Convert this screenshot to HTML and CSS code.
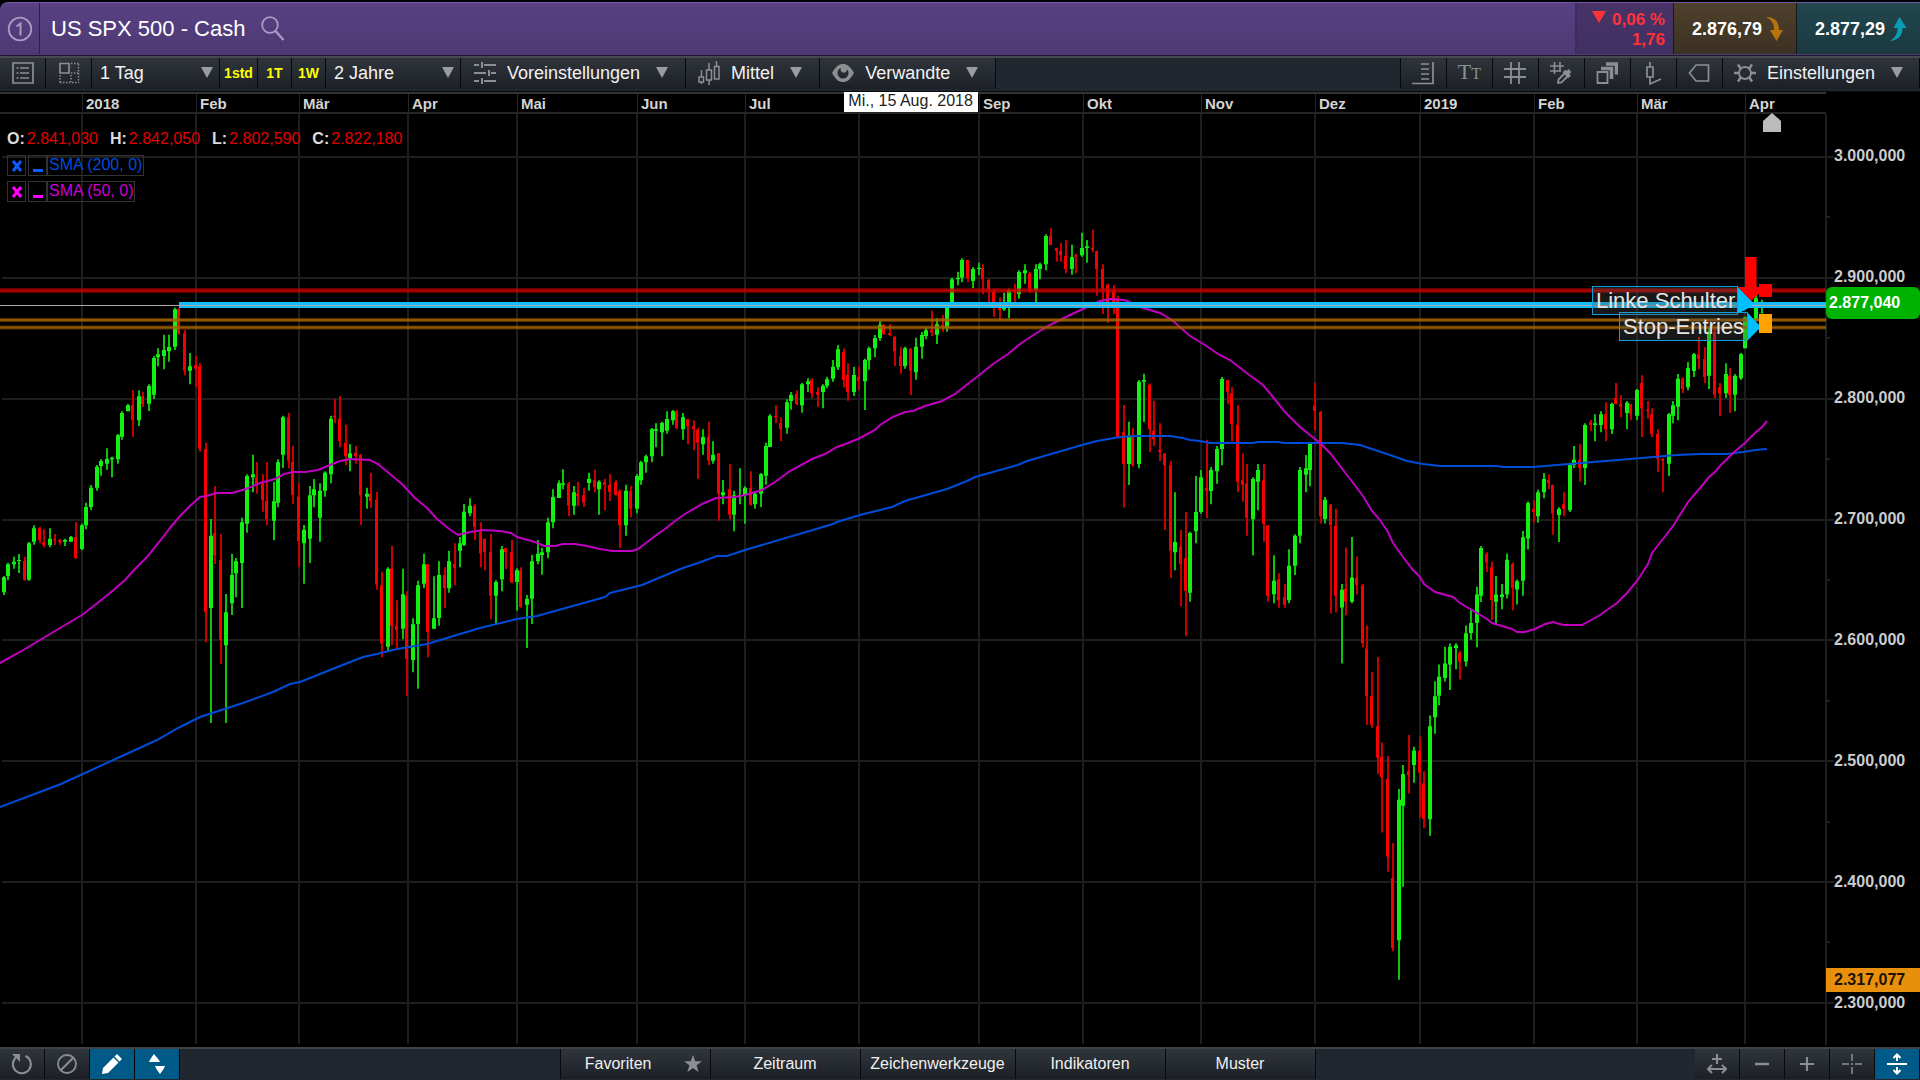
FILE: index.html
```html
<!DOCTYPE html>
<html lang="de">
<head>
<meta charset="utf-8">
<title>US SPX 500 - Cash</title>
<link rel="stylesheet" href="styles.css">
</head>
<body>
<header class="title-bar">
  <div class="slot">
    <svg class="icon" width="26" height="26" viewBox="0 0 26 26"><circle cx="13" cy="13" r="11.3"/><path d="M9.5 10.5 13.5 7.500V19.500" stroke-width="2"/></svg>
  </div>
  <h1 class="instrument">US SPX 500 - Cash</h1>
  <button class="search" aria-label="Suchen"><svg class="icon" width="26" height="28" viewBox="0 0 26 28"><circle cx="10" cy="10" r="7.800"/><path d="M15.500 16 23.500 25" stroke-width="2.400"/></svg></button>
  <div class="change"><span><i class="down"></i>0,06 %</span><span>1,76</span></div>
  <button class="quote sell">2.876,79<svg width="18" height="26" viewBox="0 0 18 26"><path fill="#b8720d" d="M0 1C9 1 13 6 13 14H17L10.500 25 4 14H8C8 8 6 4 0 1Z"/></svg></button>
  <button class="quote buy">2.877,29<svg width="18" height="26" viewBox="0 0 18 26"><path fill="#0a9cb5" d="M1 25C10 24 13.500 19 13.500 12H17.500L10.500 1 4.500 12H8.500C8.500 18 6 22 1 25Z"/></svg></button>
</header>

<nav class="toolbar" aria-label="Chart">
  <button class="tool" aria-label="Liste"><svg class="icon" width="22" height="22" viewBox="0 0 22 22"><path d="M1 1H21V21H1ZM8 6H17M8 11H17M8 16H17M4.500 6H6.500M4.500 11H6.500M4.500 16H6.500" stroke-width="1.700"/></svg></button>
  <button class="tool" aria-label="Layout"><svg class="icon" width="22" height="22" viewBox="0 0 22 22"><path d="M2 1.500H11V11H2Z" stroke-width="1.700"/><path d="M13 1.500H21M20.500 2V20M2 13V20.500M2 20.500H21M13 13V20M13 11H21" stroke-dasharray="1.500 1.500" stroke-width="1.500"/></svg></button>
  <span class="picker wide"><select aria-label="Intervall"><option>1 Tag</option></select><i class="caret"></i></span>
  <button class="quick q1">1std</button>
  <button class="quick q2">1T</button>
  <button class="quick q2">1W</button>
  <span class="picker wider"><select aria-label="Zeitraum"><option>2 Jahre</option></select><i class="caret"></i></span>
  <button class="menu presets"><svg class="icon" width="22" height="24" viewBox="0 0 22 24"><path d="M0 4H5M10 4H22M0 12H12M17 12H22M0 20H5M10 20H22" stroke-width="2"/><path d="M8 1V7M15 9V15M8 17V23" stroke-width="2"/></svg>Voreinstellungen<i class="caret"></i></button>
  <button class="menu"><svg class="icon" width="22" height="26" viewBox="0 0 22 26"><path d="M1 17H5.500V22H1ZM8.500 10H13.500V20H8.500ZM16.500 6.500H21V19H16.500ZM3.500 10V17M3.500 22V24M11 3V10M11 20V25M18.500 1V6.500" stroke-width="1.500"/></svg>Mittel<i class="caret"></i></button>
  <button class="menu"><svg width="22" height="20" viewBox="0 0 22 20"><path fill="#8c8f92" fill-rule="evenodd" d="M0 10C4 3 7 1 11 1S18 3 22 10C18 17 15 19 11 19S4 17 0 10ZM11 4.500A5.500 5.500 0 1 0 16.500 10 5 5 0 0 0 15 6.500 3 3 0 0 1 11 9.500 3 3 0 0 1 9 5Z"/></svg>Verwandte<i class="caret"></i></button>
  <span class="spacer"></span>
  <button class="tool" aria-label="Preisachse"><svg class="icon" width="22" height="24" viewBox="0 0 22 24"><path d="M0 22.500H21V1M9 3H17M9 8H17M9 13H17M9 18H17" stroke-width="1.700"/></svg></button>
  <button class="tool letters" aria-label="Textgröße"><span>T</span><small>T</small></button>
  <button class="tool" aria-label="Raster"><svg class="icon" width="22" height="22" viewBox="0 0 22 22"><path d="M7 0V22M15 0V22M0 7H22M0 15H22" stroke-width="1.800"/></svg></button>
  <button class="tool" aria-label="Rasterfarbe"><svg class="icon" width="22" height="24" viewBox="0 0 22 24"><path d="M4.500 1V13M10 1V10M0 5H14M0 10H11" stroke-width="1.600"/><path d="M8 22 8.500 18.500 15.500 11.500 18.500 14.500 11.500 21.500Z"/><path d="M14 10 19.500 16M17 12.500 20 9.500" stroke-width="4"/></svg></button>
  <button class="tool" aria-label="Fenster"><svg class="icon" width="22" height="24" viewBox="0 0 22 24"><path d="M1.500 11H11.500V22H1.500Z" stroke-width="1.800"/><path d="M5 7.500H15.500V18M10 3H20.500V13.500" stroke-width="3.500"/></svg></button>
  <button class="tool" aria-label="Kerze"><svg class="icon" width="18" height="26" viewBox="0 0 18 26"><path d="M3 7H9V17H3ZM6 2V7M6 17V24L17 19" stroke-width="1.700"/></svg></button>
  <button class="tool" aria-label="Marke"><svg class="icon" width="22" height="20" viewBox="0 0 22 20"><path d="M1.500 10 8 2H20.500V18H8Z" stroke-width="1.700"/></svg></button>
  <button class="menu settings"><svg class="icon" width="22" height="22" viewBox="0 0 22 22"><circle cx="11" cy="11" r="6"/><path d="M0 11H5M17 11H22M7 7 4 2.500M15 7 18 2.500M7 15 4 19.500M15 15 18 19.500" stroke-width="2.400"/></svg>Einstellungen<i class="caret"></i></button>
</nav>

<main class="chart">
  <div class="months">
    <span></span><span>2018</span><span>Feb</span><span>Mär</span><span>Apr</span><span>Mai</span><span>Jun</span><span>Jul</span><span></span><span>Sep</span><span>Okt</span><span>Nov</span><span>Dez</span><span>2019</span><span>Feb</span><span>Mär</span><span>Apr</span>
    <time class="cursor-date" datetime="2018-08-15">Mi., 15 Aug. 2018</time>
  </div>
  <div class="plot">
    <svg class="layer" viewBox="0 114 1826 933" preserveAspectRatio="none" aria-hidden="true">
      <g id="grid" class="grid"></g>
      <path id="up-wicks" class="up-wick"/><path id="down-wicks" class="down-wick"/>
      <path id="down-bodies" class="down-body"/><path id="up-bodies" class="up-body"/>
      <polyline class="sma200" points="0,807 61,784 122,756 157,740 180,727 200,717 243,703 273,692 290,684 300,682 320,674 340,666 363,657 377,654 397,649 427,644 480,628 517,619 537,616 605,597 610,593 642,585 673,572 683,568 698,563 717,556 727,556 745,550 833,524 837,522 860,515 892,507 905,501 947,489 967,481 975,477 1018,465 1027,461 1082,445 1097,441 1120,437 1135,436 1170,436 1183,438 1190,440 1200,441 1210,443 1253,443 1258,442 1278,442 1285,443 1342,443 1360,445 1387,454 1407,461 1423,464 1440,466 1497,466 1503,467 1533,467 1557,465 1593,462 1630,459 1677,455 1700,454 1727,454 1743,452 1755,450 1767,449"/>
      <polyline class="sma50" points="0,663 20,652 40,640 60,628 82,615 100,601 110,593 125,580 135,569 147,557 160,541 170,528 180,516 190,506 200,497 207,496 216,493 232,493 246,489 260,483 275,479 284,474 293,472 305,472 318,470 330,465 340,461 350,459 370,460 378,464 390,474 402,484 415,498 427,508 437,519 448,528 458,535 470,532 483,530 500,531 511,533 517,537 535,542 544,546 555,546 563,544 575,544 587,546 600,549 613,551 632,551 638,549 646,543 655,536 665,529 675,521 685,514 702,504 716,498 735,497 745,495 762,490 775,482 790,471 812,459 825,454 837,447 848,443 860,438 875,430 880,425 893,417 905,412 913,411 925,406 942,401 955,394 978,376 993,364 1008,354 1020,344 1035,334 1050,325 1070,315 1085,308 1100,301 1110,299 1125,300 1143,308 1160,313 1172,320 1190,336 1205,345 1218,354 1230,360 1248,374 1263,385 1273,397 1285,412 1300,427 1320,443 1330,453 1347,475 1363,496 1372,511 1380,520 1388,532 1393,543 1403,557 1413,570 1420,577 1424,584 1435,592 1453,597 1460,603 1477,613 1487,619 1492,623 1512,629 1517,632 1525,632 1535,629 1545,624 1553,622 1563,625 1582,625 1600,615 1617,603 1627,593 1637,581 1648,564 1652,553 1663,539 1673,526 1688,502 1700,488 1709,477 1715,472 1720,466 1733,453 1745,443 1756,432 1762,427 1767,421"/>
      <g class="level red"><path class="halo" d="M0 290.500H1826"/><path class="core" d="M0 290.500H1826"/></g>
      <g class="level orange"><path class="halo" d="M0 320H1826M0 327.500H1826"/><path class="core" d="M0 320H1826M0 327.500H1826"/></g>
      <path class="resistance" d="M179 305H1826"/>
      <path class="last" d="M0 305.500H1826"/>
      <path fill="#00bfff" d="M1737 286 1754 304 1737 314Z"/>
      <path fill="#f00" d="M1745 257H1756.500V287H1766L1751 301 1738 287H1745Z"/>
      <path fill="#00bfff" d="M1743 293 1754 304 1747 309 1737 314V287Z"/>
      <path fill="#00bfff" d="M1747 312 1761 327 1747 341Z"/>
      <path fill="#f00" d="M1759 284H1772V297H1759Z"/>
      <path fill="#ffa200" d="M1759 314H1772V333H1759Z"/>
      <path fill="#bbb" d="M1763 121 1772 113 1781 121V132H1763Z"/>
    </svg>
    <span class="note left-shoulder">Linke Schulter</span>
    <span class="note stop-entries">Stop-Entries</span>
    <div class="legend">
      <dl class="ohlc"><div><dt>O:</dt><dd>2.841,030</dd></div><div><dt>H:</dt><dd>2.842,050</dd></div><div><dt>L:</dt><dd>2.802,590</dd></div><div><dt>C:</dt><dd>2.822,180</dd></div></dl>
      <div class="study blue"><button aria-label="Entfernen"><svg width="12" height="12" viewBox="0 0 12 12"><path d="M2 1 10 11M10 1 2 11"/></svg></button><button aria-label="Minimieren"><svg width="12" height="12" viewBox="0 0 12 12"><path d="M1 10.500H11"/></svg></button><span>SMA (200, 0)</span></div>
      <div class="study pink"><button aria-label="Entfernen"><svg width="12" height="12" viewBox="0 0 12 12"><path d="M2 1 10 11M10 1 2 11"/></svg></button><button aria-label="Minimieren"><svg width="12" height="12" viewBox="0 0 12 12"><path d="M1 10.500H11"/></svg></button><span>SMA (50, 0)</span></div>
    </div>
  </div>
  <div class="prices">
    <span>3.000,000</span><span>2.900,000</span><span>2.800,000</span><span>2.700,000</span><span>2.600,000</span><span>2.500,000</span><span>2.400,000</span><span>2.300,000</span>
    <strong class="tag current">2.877,040</strong>
    <strong class="tag lowest">2.317,077</strong>
  </div>
</main>

<footer class="bottom-bar">
  <div class="group">
    <button class="tool" aria-label="Zurücksetzen"><svg class="icon" width="22" height="24" viewBox="0 0 22 24"><path d="M14.500 4A9 9 0 1 1 5.500 5" stroke-width="2"/><path fill="#8c8f92" stroke="none" d="M1 2H9V10Z"/></svg></button>
    <button class="tool" aria-label="Löschen"><svg class="icon" width="22" height="22" viewBox="0 0 22 22"><circle cx="11" cy="11" r="9"/><path d="M5 17 17 5" stroke-width="2"/></svg></button>
    <button class="tool active" aria-label="Zeichnen"><svg width="22" height="22" viewBox="0 0 22 22"><path fill="#fff" d="M1 21 2 15 12.500 4.500 17.500 9.500 7 20ZM13.500 3.500 16 1 21 6 18.500 8.500Z"/></svg></button>
    <button class="tool active" aria-label="Sortieren"><svg width="18" height="22" viewBox="0 0 18 22"><path fill="#fff" d="M1 9C2 6 4 4 6 1 8 4 11 6 12 9ZM7 13H17C16 16 14 18 12 21 10 18 8 16 7 13Z"/></svg></button>
  </div>
  <div class="group tabs">
    <button class="favorites">Favoriten<svg width="18" height="18" viewBox="0 0 20 20"><path fill="#8c8f92" d="M10 0 12.500 7H20L14 11.500 16.200 19 10 14.500 3.800 19 6 11.500 0 7H7.500Z"/></svg></button>
    <button>Zeitraum</button>
    <button class="drawing">Zeichenwerkzeuge</button>
    <button>Indikatoren</button>
    <button>Muster</button>
  </div>
  <div class="group">
    <button class="tool" aria-label="Breite"><svg class="icon" width="20" height="22" viewBox="0 0 20 22"><path d="M10 1V11M5 6H15M1 16H19M5 12 1 16 5 20M15 12 19 16 15 20" stroke-width="2"/></svg></button>
    <button class="tool" aria-label="Verkleinern"><svg class="icon" width="14" height="14" viewBox="0 0 14 14"><path d="M0 7H14" stroke-width="2.500"/></svg></button>
    <button class="tool" aria-label="Vergrößern"><svg class="icon" width="14" height="14" viewBox="0 0 14 14"><path d="M0 7H14M7 0V14" stroke-width="2.200"/></svg></button>
    <button class="tool" aria-label="Fadenkreuz"><svg class="icon" width="20" height="20" viewBox="0 0 20 20"><path d="M0 10H7M13 10H20M10 0V7M10 13V20M9 10H11" stroke-width="1.500"/></svg></button>
    <button class="tool active" aria-label="Höhe"><svg width="20" height="22" viewBox="0 0 20 22" fill="none" stroke="#fff" stroke-width="2"><path d="M0 11H20M10 1V8M6.500 5 10 1.500 13.500 5M10 14V21M6.500 17 10 20.500 13.500 17"/></svg></button>
  </div>
</footer>
<script src="chart.js"></script>
</body>
</html>
```

FILE: styles.css
```css
* { box-sizing: border-box; }

body {
  margin: 0;
  min-height: 100vh;
  padding-top: 2px;
  display: flex;
  flex-direction: column;
  background: #000;
  color: #e8e9ea;
  font: 18px/22px "Liberation Sans", Arial, sans-serif;
}

button, select {
  margin: 0;
  padding: 0;
  border: 0;
  border-radius: 0;
  background: none;
  color: inherit;
  font: inherit;
}

svg { display: block; flex: none; }
.icon { fill: none; stroke: #8c8f92; stroke-width: 1.8; }

/* title bar */
.title-bar {
  display: flex;
  height: 54px;
  padding-bottom: 1px;
  border-top: 1px solid #7457a5;
  border-bottom: 1px solid #1d1730;
  border-top-left-radius: 8px;
  background: linear-gradient(#584184, #4d3972);
  overflow: hidden;
}
.title-bar .icon { stroke: #a99bc4; }
.slot {
  width: 40px;
  display: flex;
  align-items: center;
  justify-content: center;
  border-right: 1px solid #2c2144;
}
.instrument {
  margin: 0;
  padding: 0 15px 0 11px;
  align-self: center;
  color: #fff;
  font-size: 22px;
  font-weight: 400;
}
.search { margin-right: auto; }
.change {
  width: 99px;
  padding: 7px 8px;
  border-left: 2px solid #3c2c61;
  border-right: 1px solid #1a1428;
  background: linear-gradient(#483369, #403061);
  color: #ff3238;
  font-size: 17px;
  font-weight: 700;
  line-height: 20px;
  text-align: right;
}
.change span { display: block; }
.down {
  display: inline-block;
  margin-right: 6px;
  vertical-align: 2px;
  border: 7px solid transparent;
  border-top: 12px solid #ff3238;
  border-bottom: 0;
}
.quote {
  display: flex;
  align-items: center;
  gap: 4px;
  padding: 0 14px 0 18px;
  color: #fff;
  font-weight: 700;
}
.sell { width: 123px; background: linear-gradient(#4e402c, #3c3122); border-right: 1px solid #161616; }
.buy { width: 123px; background: linear-gradient(#22474f, #1b383f); }

/* toolbars */
.toolbar, .bottom-bar { display: flex; background: #20272f; }
.toolbar { height: 35px; padding-bottom: 2px; border-top: 2px solid #464a4f; }
.toolbar > * { padding-bottom: 2px; border-right: 1px solid #08090b; background: linear-gradient(#30353c, #1c2026); }
.toolbar .spacer { flex: 1; background: none; }
.tool { display: flex; width: 46px; align-items: center; justify-content: center; }
.picker { display: grid; align-items: center; }
.picker > * { grid-area: 1 / 1; }
.picker select { appearance: none; width: 100%; padding-left: 8px; color: #f2f2f2; }
.picker option { color: #000; }
.wide { width: 128px; }
.wider { width: 135px; }
.caret {
  justify-self: end;
  border: 6px solid transparent;
  border-top: 11px solid #9a9da0;
  border-bottom: 0;
  pointer-events: none;
}
.picker .caret { margin-right: 6px; }
.quick { color: #ff0; font-size: 14px; font-weight: 700; }
.q1 { width: 38px; }
.q2 { width: 34px; }
.menu { display: flex; align-items: center; gap: 11px; padding-left: 12px; padding-right: 17px; color: #f2f2f2; }
.menu .caret { margin-left: 5px; }
.menu.presets { padding-left: 13px; }
.menu.settings { padding-left: 11px; padding-right: 16px; }
.letters { color: #8c8f92; font: 22px/28px "Liberation Serif", serif; align-items: baseline; }
.letters small { font-size: 16px; }

.bottom-bar { height: 33px; padding-bottom: 1px; justify-content: space-between; border-top: 2px solid #3f4349; }
.group { display: flex; }
.group > * { border-right: 1px solid #08090b; background: linear-gradient(#30353c, #1c2026); }
.bottom-bar .tool { width: 45px; }
.bottom-bar .active { background: #005a87; }
.tabs { border-left: 1px solid #08090b; font-size: 16px; }
.tabs button { width: 150px; color: #f0f0f0; }
.tabs .drawing { width: 155px; }
.tabs .favorites { display: flex; align-items: center; justify-content: flex-end; gap: 32px; padding-right: 8px; }

/* chart */
.chart {
  flex: 1;
  display: grid;
  grid-template-columns: minmax(0, 1fr) 94px;
  grid-template-rows: 22px minmax(0, 1fr);
  border-top: 1px solid #08090b;
}
.months {
  position: relative;
  display: grid;
  grid-template-columns: 82fr 114fr 103fr 109fr 109fr 120fr 108fr 114fr 120fr 104fr 118fr 114fr 105fr 114fr 103fr 108fr 81fr;
  border-top: 2px solid #333;
  border-bottom: 2px solid #252525;
  color: #d4d4d4;
  font-size: 15px;
  font-weight: 700;
  line-height: 20px;
}
.months span { padding-left: 3px; border-left: 1px solid #252525; }
.months span:first-child { border: 0; }
.cursor-date {
  position: absolute;
  top: -2px;
  left: 46.2%;
  width: 134px;
  height: 20px;
  background: #fff;
  color: #222;
  font-size: 16px;
  font-weight: 400;
  line-height: 18px;
  text-align: center;
}
.plot { position: relative; }
.layer { position: absolute; inset: 0; width: 100%; height: 100%; overflow: visible; pointer-events: none; }
.layer path, .layer polyline { vector-effect: non-scaling-stroke; }
.grid path { stroke: #1e1e1e; stroke-width: 2; }
.up-wick { stroke: #0cc40c; stroke-width: 2; }
.down-wick { stroke: #c80000; stroke-width: 2; }
.up-body { fill: #14f014; }
.down-body { fill: #f80000; }
.sma200, .sma50 { fill: none; stroke-width: 2; }
.sma200 { stroke: #004cd8; }
.sma50 { stroke: #c000c0; }
.level { fill: none; }
.halo { stroke-width: 5; opacity: .5; }
.core { stroke-width: 2; opacity: .75; }
.red { stroke: #d00000; }
.orange { stroke: #a86400; }
.orange .halo { stroke-width: 4; }
.resistance { stroke: #14bdfa; stroke-width: 6; }
.last { stroke: #a8a8a8; stroke-width: 1; }
.note {
  position: absolute;
  height: 29px;
  padding: 0 3px;
  border: 1px solid #12a0dc;
  background: rgb(80 80 80 / 30%);
  color: #e6e6e6;
  font-size: 22px;
  line-height: 27px;
  text-align: center;
  white-space: nowrap;
}
.left-shoulder { top: 18.4%; right: 88px; width: 146px; }
.stop-entries { top: 21.2%; right: 78px; width: 129px; }

.legend { position: relative; padding: 15px 7px; font-size: 16px; }
.ohlc { display: flex; gap: 12px; margin: 0 0 6px; line-height: 20px; }
.ohlc div { display: flex; gap: 2px; }
.ohlc dt { font-weight: 700; color: #ddd; }
.ohlc dd { margin: 0; color: #e00000; }
.study { display: flex; height: 21px; margin-bottom: 5px; }
.study > * { border: 1px solid #333; }
.study button { display: grid; place-items: center; width: 19px; margin-right: 2px; }
.study button + button { margin-right: 0; }
.study span { padding: 0 1px; line-height: 18px; }
.study path { stroke: currentColor; stroke-width: 3; }
.blue { color: #004cd8; }
.blue button { color: #0a5cff; }
.pink { color: #d000d0; }
.pink button { color: #f0f; }

.prices {
  grid-area: 1 / 2 / 3 / 3;
  position: relative;
  display: grid;
  grid-template-rows: 74fr repeat(7, 121fr) 34fr;
  padding-left: 8px;
  align-items: end;
  color: #ccc;
  font-size: 16px;
  font-weight: 700;
  line-height: 20px;
}
.tag { position: absolute; left: 0; right: 0; }
.current { top: 20.4%; padding: 0 3px; border-radius: 6px; background: #00b200; color: #fff; line-height: 32px; }
.lowest { top: 91.7%; padding: 0 8px; background: #e8900c; color: #1c1200; line-height: 24px; }
```

FILE: chart.js
```js
// Daily candles, stored in blocks. Every block has an origin and a resolution
// (units per pixel); a row is: colour, x, high, body top, body bottom, low.
const blocks = [
  { origin: [0, 280], scale: [3, 3], rows: `
g 11 888 892 937 945|g 25 848 853 888 901|g 42 830 845 853 866|g 56 822 840 843 879|r 74 830 843 899 902
g 88 786 790 899 902|g 101 736 745 785 794|r 119 740 745 780 790|r 132 748 787 795 802|g 151 745 776 795 802
r 164 762 777 781 795|r 181 776 781 785 794|g 196 776 780 785 798|g 214 768 771 785 785|r 227 726 771 834 836
g 245 731 736 807 811|g 259 668 681 736 748|g 272 615 623 681 690|g 290 555 560 623 632|g 304 538 543 558 587
g 321 505 537 551 569|g 335 530 533 538 592|g 353 462 466 538 551|g 367 394 399 470 479|g 385 372 376 394 394
r 398 330 376 420 470|g 416 331 349 421 438|r 429 335 349 372 381|g 448 313 318 371 393|g 461 228 234 344 357
g 475 205 223 232 259|g 493 164 210 228 268|g 506 164 201 214 245|g 524 83 88 200 210|r 537 83 88 160 164
r 555 150 160 272 286|g 569 219 259 272 313|r 587 227 255 266 322|r 600 250 259 506 515|r 618 488 507 997 1087
g 632 717 767 984 1329|r 645 618 759 826 852|r 663 762 840 1080 1153|g 677 942 997 1096 1329|g 695 821 885 970 1005
g 709 834 844 880 952|g 727 713 727 849 984|g 740 583 588 731 758|g 758 524 583 592 637|r 771 546 592 612 641
r 789 583 610 659 695|r 802 546 663 718 736|g 821 605 664 722 781|g 835 538 547 668 682|g 848 407 412 524 564
r 866 398 412 542 565|r 880 497 546 645 672|r 897 610 650 784 862|g 911 735 749 790 911|g 929 618 646 776 849
g 942 597 628 646 682|g 961 610 632 713 785|g 974 574 578 632 650|g 992 407 416 583 610|r 1006 357 407 412 430
r 1019 348 416 484 502|r 1037 434 488 529 556|g 1050 493 520 534 574|r 1069 497 519 528 551|r 1082 522 524 646 736
g 1100 623 641 650 686|r 1114 578 641 664 683|r 1131 636 659 911 929|r 1145 875 916 1090 1132|g 1163 862 866 1100 1113
r 1177 798 866 1037 1096|r 1190 961 1037 1050 1108|g 1208 866 943 1046 1078|r 1222 934 947 1136 1249|g 1240 1015 1033 1140 1177
g 1253 902 916 1032 1226|g 1271 821 853 911 925|r 1285 852 853 1055 1132|g 1303 889 1015 1046 1046|g 1316 844 885 1014 1037
r 1334 862 885 925 984|g 1348 812 844 925 938|r 1366 790 852 864 916|g 1379 771 790 812 862|g 1393 672 695 794 798
g 1411 655 677 700 709|r 1424 672 677 740 781` },
  { origin: [400, 380], scale: [3, 3], rows: `
r 242 427 455 520 562|r 256 475 477 516 571|r 273 462 516 647 718|g 287 601 606 647 734|g 305 498 508 598 634
r 319 503 504 516 567|r 336 480 517 607 610|g 350 565 571 606 692|r 363 562 571 681 683|g 381 645 656 674 804
g 395 525 544 656 732|g 413 480 521 544 553|g 427 503 517 525 584|g 445 413 427 517 535|g 458 328 351 427 445
g 476 301 310 354 354|g 489 268 310 314 328|r 507 305 311 377 408|g 521 318 337 377 404|r 535 305 342 347 377
r 553 323 346 367 381|g 566 278 296 309 332|r 584 269 301 322 337|g 598 301 305 328 404|r 615 296 306 314 391
r 629 282 315 336 363|r 647 301 306 344 347|r 660 328 333 436 503|g 679 314 332 436 467|r 692 318 334 386 412
g 710 283 288 386 400|g 723 242 247 301 314|g 737 224 229 247 278|g 755 144 148 229 247|g 769 130 147 152 202
g 787 125 129 157 229|g 800 94 117 152 161|g 818 90 94 121 134|r 831 89 94 144 148|g 850 99 112 148 179
r 863 117 117 139 193|r 881 121 139 147 211|r 894 143 149 188 296|g 908 148 171 193 224|r 926 125 171 241 256
g 940 184 224 242 251|r 957 219 220 341 422|g 970 300 337 346 373|r 989 251 328 404 418|g 1003 332 346 404 454
g 1020 265 346 350 373|g 1034 319 323 346 431|r 1052 274 324 374 377|g 1065 335 341 373 386|g 1083 279 283 341 381
g 1097 188 198 287 314|g 1110 103 107 201 202|r 1128 76 108 112 130|r 1142 112 129 148 184|g 1160 58 67 143 161
g 1173 36 45 63 89|r 1191 31 41 72 76|g 1205 9 13 76 98|g 1223 -5 4 13 36|r 1236 -5 0 40 53
r 1254 22 36 44 80|g 1268 13 17 36 85|g 1281 -10 -2 17 25|g 1300 -60 -40 -4 5|g 1313 -105 -92 -38 -30
r 1331 -95 -85 0 22|r 1344 -50 -15 36 62|g 1362 -40 -15 36 48|r 1376 -40 -10 3 31` },
  { origin: [860, 210], scale: [3, 3], rows: `
g 14 446 450 514 600|g 28 410 415 451 479|g 46 375 384 415 442|g 59 334 344 384 392|r 73 343 345 371 375
r 91 343 370 375 379|r 104 379 380 424 468|r 122 410 437 468 491|g 136 410 415 468 476|r 153 415 416 482 555
g 167 383 410 487 509|g 185 366 375 410 446|g 199 352 361 378 388|r 217 302 360 367 379|g 230 325 343 374 402
r 248 316 345 350 366|g 262 288 290 354 365|g 275 203 208 280 285|g 293 185 203 208 226|g 307 145 150 203 217
r 325 149 150 204 217|g 338 172 177 213 235|g 356 158 173 177 195|r 370 163 173 208 253|r 388 208 209 240 280
r 401 236 245 280 321|r 419 262 285 300 330|g 433 248 280 298 302|g 446 236 241 285 325|r 464 221 240 245 280
g 478 181 186 252 266|g 495 163 181 190 221|r 509 185 190 240 248|g 527 163 177 240 280|g 540 158 163 177 208
g 559 73 78 163 181|r 572 55 78 105 106|r 590 113 114 123 155|r 604 99 123 136 155|r 618 90 137 177 190
g 635 104 141 177 194|r 649 131 136 140 190|g 667 68 114 136 140|g 680 90 109 114 158|r 698 59 114 119 127
r 711 122 124 177 257|r 730 163 177 235 312|r 743 221 224 290 339|r 761 226 240 280 312|r 775 257 266 682 684
r 793 585 667 761 892|g 807 635 677 762 825|r 820 653 680 765 771|g 838 510 515 762 775|g 851 491 510 515 636
r 869 521 524 658 726|r 882 572 662 688 708|r 901 640 720 725 753|r 914 729 731 766 960|r 932 752 766 1022 1104
g 946 847 996 1027 1081|r 964 960 1010 1062 1189|r 977 906 1045 1143 1279|g 991 965 969 1148 1175|g 1009 798 906 964 1000
g 1022 780 802 906 911|r 1040 689 833 842 924|g 1054 771 780 843 883|g 1072 708 717 784 821|g 1085 501 507 717 766
r 1103 509 511 545 581|r 1117 532 550 643 694|r 1135 586 644 815 847|r 1148 730 811 824 875|r 1161 762 821 923 977
g 1180 802 807 928 1036|g 1193 762 780 815 901|r 1211 762 811 941 995|r 1224 945 947 1157 1175|g 1242 1036 1112 1153 1180
r 1256 1090 1108 1171 1193|r 1274 1121 1161 1184 1193|g 1287 1018 1067 1171 1180|g 1305 973 977 1067 1095|g 1319 771 780 977 1000
g 1337 735 775 794 847|g 1351 695 700 780 829` },
  { origin: [1280, 370], scale: [3, 2.529], rows: `
r 104 32 90 103 153|r 122 104 106 370 388|g 136 321 328 377 388|r 153 339 341 392 616|r 167 351 394 571 613
g 185 541 556 601 742|r 199 449 553 586 620|g 217 422 525 586 590|r 230 472 526 544 568|r 248 541 545 691 701
r 262 646 704 824 897|r 275 764 825 897 905|r 293 726 901 980 1022|r 307 942 978 1030 1170|r 325 976 1034 1230 1269
r 338 1196 1285 1462 1470|g 356 1060 1087 1442 1542|g 370 999 1022 1102 1307|r 388 923 1015 1025 1071|g 401 953 962 999 1044
r 419 927 963 1018 1132|r 433 1015 1046 1135 1158|g 451 874 901 1136 1178|g 464 787 825 878 920|g 478 745 776 824 848
g 496 700 742 779 788|g 509 692 700 745 809|g 527 691 696 703 757|r 541 711 715 738 783|g 559 646 666 737 750
g 572 605 640 665 682|g 590 548 568 639 701|g 604 445 450 571 587|r 621 461 465 487 511|r 635 484 499 582 632
g 649 521 568 586 644|g 667 541 568 574 605|g 680 464 480 567 578|r 698 487 491 551 608|g 712 530 534 555 593
g 730 407 423 533 571|g 743 332 336 426 454` },
  { origin: [1500, 300], scale: [3, 3], rows: `
r 101 600 627 635 668|g 115 569 577 649 668|g 133 519 537 577 595|r 146 523 540 549 568|r 160 554 555 640 704
g 178 622 627 645 726|r 191 577 613 627 649|g 209 488 493 631 636|g 223 438 479 495 504|r 241 433 480 504 545
g 254 370 375 504 555|r 272 360 366 375 393|g 286 343 370 375 424|g 304 334 343 375 397|r 317 307 343 388 424
g 335 308 312 388 402|r 349 249 294 312 313|r 362 285 312 320 352|g 380 303 308 339 388|r 394 312 312 343 361
g 412 267 270 347 361|r 425 226 249 325 411|r 443 303 329 333 356|r 457 325 343 402 411|r 475 388 402 476 515
r 488 474 478 483 577|g 506 339 343 491 528|g 519 303 316 347 370|g 533 222 236 320 361|r 550 231 236 267 280
g 565 186 204 262 271|g 583 159 163 213 231|r 596 110 163 177 208|r 614 141 177 231 249|g 628 80 95 227 267
r 646 80 95 285 294|r 659 249 262 280 348|g 677 190 222 280 294|r 691 204 227 285 339|g 704 222 227 284 334
g 722 159 163 235 240|g 736 50 52 145 145|g 768 -15 -5 62 62|g 786 -1 38 40 40` },
];

const wicks = { g: '', r: '' };
const bodies = { g: '', r: '' };
for (const { origin, scale, rows } of blocks) {
  for (const row of rows.trim().split(/[|\n]/)) {
    const [kind, ...values] = row.split(' ');
    const [x, high, top, bottom, low] = values.map(Number);
    const px = Math.round(origin[0] + x / scale[0]);
    const y = (v) => (origin[1] + v / scale[1]).toFixed(1);
    wicks[kind] += `M${px} ${y(high)}V${y(low)}`;
    const right = kind === 'g' ? px + 2 : px + 1;
    bodies[kind] += `M${px - 2} ${y(top)}H${right}V${y(bottom)}H${px - 2}Z`;
  }
}
document.getElementById('up-wicks').setAttribute('d', wicks.g);
document.getElementById('down-wicks').setAttribute('d', wicks.r);
document.getElementById('up-bodies').setAttribute('d', bodies.g);
document.getElementById('down-bodies').setAttribute('d', bodies.r);

const months = [82, 196, 299, 408, 517, 637, 745, 859, 979, 1083, 1201, 1315, 1420, 1534, 1637, 1745];
const prices = [157, 278, 399, 520, 640, 761, 882, 1003];
const ticks = [217, 338, 459, 580, 701, 822, 942];
const grid = document.createElementNS('http://www.w3.org/2000/svg', 'path');
grid.setAttribute('d',
  months.map((x) => `M${x} 114V1044`).join('') +
  prices.map((y) => `M2 ${y}H1834`).join('') +
  ticks.map((y) => `M1826 ${y}H1830`).join('') +
  'M1826 114V1045');
document.getElementById('grid').append(grid);
```
